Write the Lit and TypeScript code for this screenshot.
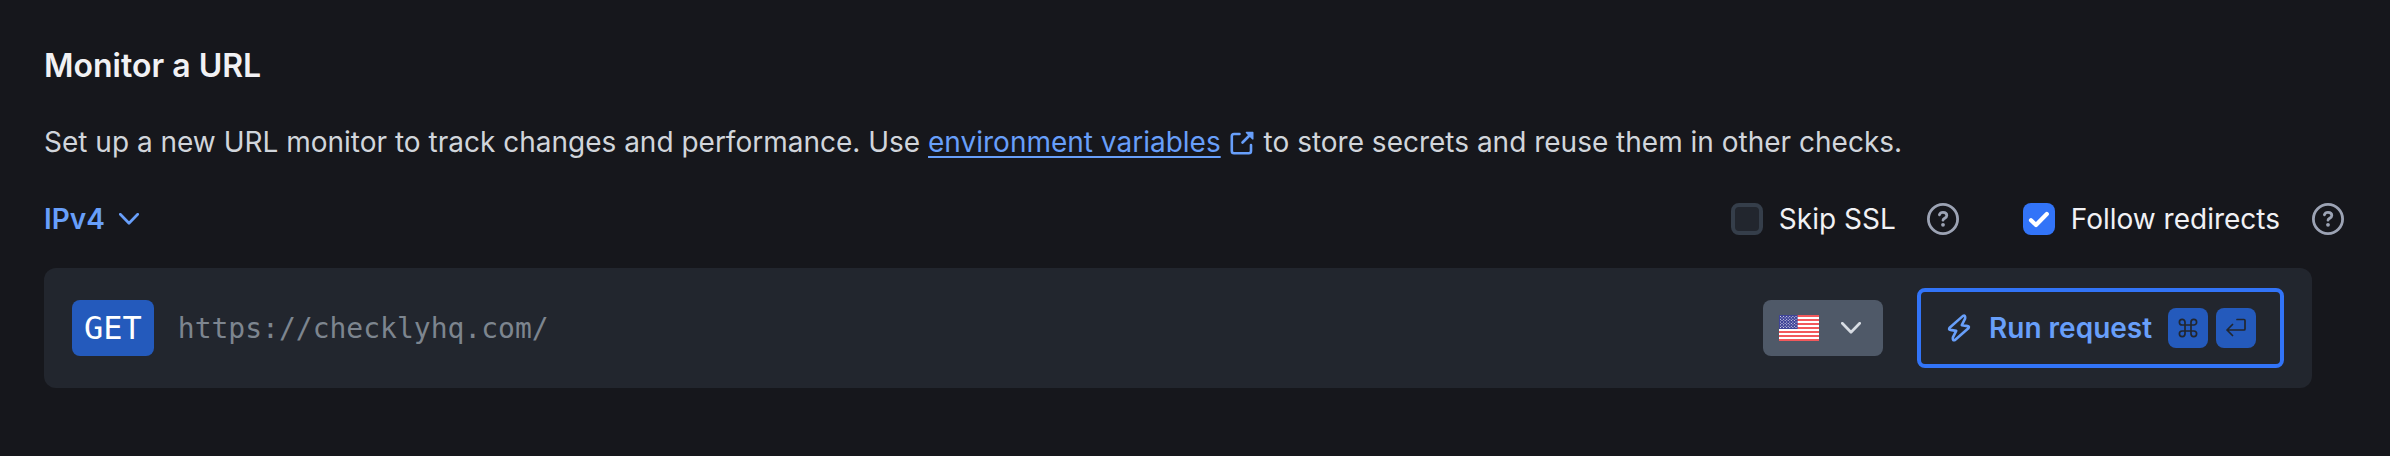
import { LitElement, html, svg, css } from "lit";
import { customElement } from "lit/decorators.js";

const STRIPES = [0, 2, 4, 6, 8, 10, 12];
const STARS = Array.from({ length: 9 }, (_, row) =>
  Array.from({ length: row % 2 ? 5 : 6 }, (_, col) => ({
    x: 1.5 + col * 3.1 + (row % 2 ? 1.5 : 0),
    y: 1.4 + row * 1.4,
  }))
).flat();

const chevron = html`<svg class="chevron" viewBox="0 0 20 12" width="20" height="12" fill="none" stroke="currentColor" stroke-width="2.7" stroke-linecap="round" stroke-linejoin="round"><path d="M1.3 1.3 10 10.2 18.7 1.3" /></svg>`;

const help = html`<svg class="help" viewBox="0 0 32 32" width="32" height="32" fill="none" stroke="currentColor" stroke-width="2.8" stroke-linecap="round" stroke-linejoin="round"><circle cx="16" cy="16" r="14.6" /><path d="M12.4 11.8c.5-1.5 1.8-2.4 3.6-2.4 2.2 0 3.8 1.3 3.8 3.1 0 2.5-3.8 2.8-3.8 4.7" /><circle cx="16" cy="21.8" r="1.9" fill="currentColor" stroke="none" /></svg>`;

@customElement("app-root")
export class AppRoot extends LitElement {
  static styles = css`
    :host {
      display: block;
      box-sizing: border-box;
      height: 456px;
      padding: 44px 46px 0 44px;
      background: #16171c;
      color: #d1d5db;
      font: 400 28px/44px Inter, sans-serif;
      white-space: nowrap;
      -webkit-font-smoothing: antialiased;
    }
    svg { display: block; flex: none; }
    .title { margin: 0; font-size: 32px; line-height: 44px; font-weight: 600; color: #f1f1f4; }
    .intro { margin: 32px 0 0; display: flex; white-space: pre; }
    .link { color: #689ffa; display: flex; }
    .link-text { text-decoration: underline 2px; text-underline-offset: 4px; text-decoration-skip-ink: none; }
    .external { margin: 11px 2px 0 9px; }
    .options { display: flex; align-items: center; margin-top: 33px; height: 44px; color: #f1f1f4; }
    .ip { display: flex; align-items: center; gap: 14px; color: #689ffa; font-weight: 600; }
    .checks { display: flex; align-items: center; margin-left: auto; gap: 64px; }
    .check { display: flex; align-items: center; }
    .box { box-sizing: border-box; width: 32px; height: 32px; border-radius: 8px; border: 4px solid #353e4a; background: #22262e; margin-right: 16px; }
    .box.on { border: 0; background: #3274f8; }
    .help { color: #9ca3b4; margin-left: 32px; }
    .check:first-child .help { margin-left: 31px; }
    .bar { box-sizing: border-box; display: flex; align-items: center; width: 2268px; height: 120px; margin-top: 27px; padding: 0 28px; border-radius: 12px; background: #22262e; }
    .method { display: flex; align-items: center; height: 56px; padding: 0 12px; border-radius: 8px; background: #245abc; color: #fff; font: 32px "DejaVu Sans Mono", monospace; }
    .url { flex: 1; margin-left: 24px; color: #7d858f; font: 28px "DejaVu Sans Mono", monospace; }
    .region { box-sizing: border-box; display: flex; align-items: center; justify-content: space-between; width: 120px; height: 56px; padding: 0 22px 0 16px; border-radius: 8px; background: #4f5968; color: #d7dce3; }
    .run { box-sizing: border-box; display: flex; align-items: center; width: 367px; height: 80px; margin-left: 34px; padding: 0 24px 0 26px; border: 4px solid #3274f8; border-radius: 8px; color: #689ffa; font-weight: 600; }
    .run-text { flex: 1; margin-left: 18px; }
    .keys { display: flex; gap: 8px; }
    .key { display: grid; place-items: center; width: 40px; height: 40px; border-radius: 8px; background: #245abc; color: #22262e; }
  `;

  render() {
    return html`
      <h1 class="title">Monitor a URL</h1>
      <p class="intro"><span>Set up a new URL monitor to track changes and performance. Use </span><span class="link"><span class="link-text">environment variables</span><svg class="external" viewBox="0 0 24 24" width="24" height="24" fill="none" stroke="currentColor" stroke-width="2.6" stroke-linecap="round" stroke-linejoin="round"><path d="M9.5 3H4Q1.8 3 1.8 5.2V20Q1.8 22.2 4 22.2H18.8Q21 22.2 21 20V14M12.5 11.5 20.5 3.5" /><path d="M16.4 1.5H22.8V7.9Z" fill="currentColor" stroke-width="1.4" /></svg></span><span> to store secrets and reuse them in other checks.</span></p>
      <div class="options">
        <div class="ip"><span>IPv4</span>${chevron}</div>
        <div class="checks">
          <div class="check"><span class="box"></span><span>Skip SSL</span>${help}</div>
          <div class="check"><span class="box on"><svg viewBox="0 0 32 32" width="32" height="32" fill="none" stroke="#fff" stroke-width="4.2" stroke-linecap="round" stroke-linejoin="round"><path d="M8 17.3 13 22 23.8 11" /></svg></span><span>Follow redirects</span>${help}</div>
        </div>
      </div>
      <div class="bar">
        <span class="method">GET</span>
        <span class="url">https://checklyhq.com/</span>
        <span class="region">
          <svg viewBox="0 0 40 26" width="40" height="26"><rect width="40" height="26" fill="#fff" />${STRIPES.map((s) => svg`<rect y=${s * 2} width="40" height="2" fill="#f2585b" />`)}<rect width="18.6" height="14" fill="#3f4498" />${STARS.map((s) => svg`<circle cx=${s.x} cy=${s.y} r=".5" fill="#fff" />`)}</svg>
          ${chevron}
        </span>
        <span class="run">
          <svg viewBox="0 0 24 28" width="24" height="28" fill="none" stroke="currentColor" stroke-width="2.6" stroke-linejoin="round"><path d="M16 1.9 2.6 13.8Q1.4 15.6 3.4 15.9L9.2 16.9 5.9 23.4Q5.4 27.2 8 26L21.4 14.2Q22.6 12.4 20.6 12.1L14.8 11.1 18.1 4.6Q18.6.8 16 1.9Z" /></svg>
          <span class="run-text">Run request</span>
          <span class="keys">
            <span class="key"><svg viewBox="0 0 20 20" width="20" height="20" fill="none" stroke="currentColor" stroke-width="1.7"><path d="M7 7H4.2A2.8 2.8 0 1 1 7 4.2V15.8A2.8 2.8 0 1 1 4.2 13H15.8A2.8 2.8 0 1 1 13 15.8V4.2A2.8 2.8 0 1 1 15.8 7Z" /></svg></span>
            <span class="key"><svg viewBox="0 0 20 20" width="20" height="20" fill="none" stroke="currentColor" stroke-width="1.7" stroke-linecap="round" stroke-linejoin="round"><path d="M11 1.5H18Q19 1.5 19 2.5V11Q19 12 18 12H1M6.5 6.5 1 12 6.5 17.5" /></svg></span>
          </span>
        </span>
      </div>
    `;
  }
}
